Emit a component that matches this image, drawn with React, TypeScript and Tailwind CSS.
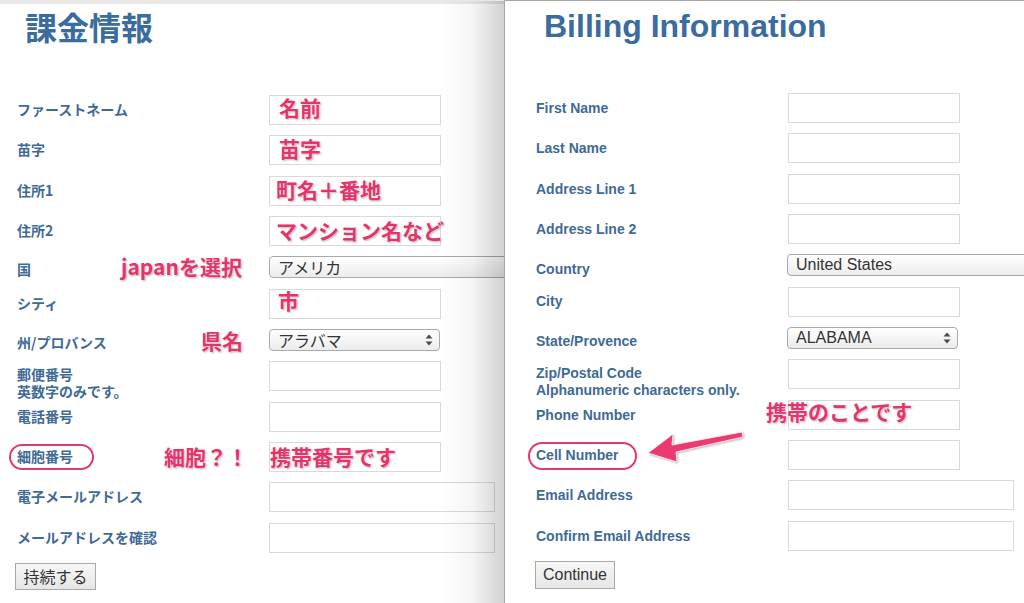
import type { ReactNode } from 'react'

const jp = "font-['Noto_Sans_CJK_JP',sans-serif]"
const en = "font-['Liberation_Sans',Arial,sans-serif]"

function Note({ className, children }: { className: string; children: ReactNode }) {
  return (
    <span
      className={`absolute whitespace-nowrap text-[21px] font-bold leading-none text-[#e5336b] [text-shadow:0_0_2px_#fff,1px_1px_2px_rgba(0,0,0,0.35)] ${jp} ${className}`}
    >
      {children}
    </span>
  )
}

function Ring({ className }: { className: string }) {
  return <span className={`absolute rounded-full border-[2.5px] border-[#e23a6c] ${className}`} />
}

function TextBox({ wide }: { wide?: boolean }) {
  return (
    <input
      readOnly
      className={`h-[30px] shrink-0 border border-[#d9d9d9] bg-white outline-none ${wide ? 'w-[226px]' : 'w-[172px]'}`}
    />
  )
}

function UpDown() {
  return (
    <svg width="8" height="12" viewBox="0 0 8 12" className="shrink-0">
      <path d="M4 0.5 L7.5 4.5 H0.5 Z" fill="#4a4a4a" />
      <path d="M4 11.5 L7.5 7.5 H0.5 Z" fill="#4a4a4a" />
    </svg>
  )
}

function Select({ value, full, font }: { value: string; full?: boolean; font: string }) {
  return (
    <div
      className={`flex h-[22px] shrink-0 items-center justify-between rounded-[4px] border border-[#a9a9a9] bg-gradient-to-b from-white to-[#ececec] pl-[8px] pr-[6px] text-[16px] leading-none text-[#333] ${font} ${full ? 'w-[260px]' : 'w-[171px]'}`}
    >
      <span className="whitespace-nowrap">{value}</span>
      {!full && <UpDown />}
    </div>
  )
}

function Row({
  label,
  children,
  tall = true,
  pt,
  extra,
}: {
  label: ReactNode
  children: ReactNode
  tall?: boolean
  pt: string
  extra?: ReactNode
}) {
  return (
    <div className={`relative flex items-start ${tall ? 'h-[30px]' : 'h-[22px]'}`}>
      <div className={`w-[252px] shrink-0 whitespace-nowrap text-[14px] font-bold leading-[16px] text-[#3f6a96] ${pt}`}>
        {label}
      </div>
      {children}
      {extra}
    </div>
  )
}

function Arrow() {
  return (
    <svg
      width="112"
      height="40"
      viewBox="0 0 112 40"
      className="absolute left-[100px] top-[-12px] drop-shadow-[1px_1px_1px_rgba(0,0,0,0.3)]"
    >
      <polygon
        points="12,25 37,6 36,17 106,4 107,9 40,24 41,34"
        fill="#ec3a70"
        stroke="#fff"
        strokeWidth="0.8"
        strokeLinejoin="round"
      />
    </svg>
  )
}

export default function App() {
  return (
    <div className="flex h-[603px] w-[1024px] overflow-hidden bg-white">
      {/* Japanese form */}
      <section className={`relative flex w-[504px] shrink-0 flex-col overflow-hidden border-t-[4px] border-[#e8e8e8] pl-[17px] pt-[6px] ${jp}`}>
        <h1 className="ml-[8px] h-[32px] text-[32px] font-bold leading-none text-[#3b6c9f]">課金情報</h1>

        <div className="mt-[53px] flex flex-col gap-[10.33px]">
          <Row label="ファーストネーム" pt="pt-[6px]" extra={<Note className="left-[262px] top-[2px]">名前</Note>}>
            <TextBox />
          </Row>
          <Row label="苗字" pt="pt-[6px]" extra={<Note className="left-[262px] top-[3px]">苗字</Note>}>
            <TextBox />
          </Row>
          <Row label="住所1" pt="pt-[6px]" extra={<Note className="left-[259px] top-[3px]">町名＋番地</Note>}>
            <TextBox />
          </Row>
          <Row label="住所2" pt="pt-[6px]" extra={<Note className="left-[259px] top-[4px]">マンション名など</Note>}>
            <TextBox />
          </Row>
          <Row label="国" tall={false} pt="pt-[5px]" extra={<Note className="left-[104px] top-[0px]">japanを選択</Note>}>
            <Select value="アメリカ" full font={jp} />
          </Row>
          <Row label="シティ" pt="pt-[6px]" extra={<Note className="left-[261px] top-[1px]">市</Note>}>
            <TextBox />
          </Row>
          <Row label="州/プロバンス" tall={false} pt="pt-[5px]" extra={<Note className="left-[184px] top-[1px]">県名</Note>}>
            <Select value="アラバマ" font={jp} />
          </Row>
          <Row
            label={
              <div className="leading-[17px]">
                郵便番号
                <br />
                英数字のみです。
              </div>
            }
            pt="pt-[5px]"
          >
            <TextBox />
          </Row>
          <Row label="電話番号" pt="pt-[6px]">
            <TextBox />
          </Row>
          <Row
            label="細胞番号"
            pt="pt-[6px]"
            extra={
              <>
                <Ring className="left-[-8px] top-[2px] h-[26px] w-[85px]" />
                <Note className="left-[147px] top-[4px]">細胞？！</Note>
                <Note className="left-[253px] top-[4px]">携帯番号です</Note>
              </>
            }
          >
            <TextBox />
          </Row>
          <Row label="電子メールアドレス" pt="pt-[6px]">
            <TextBox wide />
          </Row>
          <Row label="メールアドレスを確認" pt="pt-[6px]">
            <TextBox wide />
          </Row>
          <div>
            <button className="ml-[-2px] h-[27px] w-[81px] border border-[#a9a9a9] bg-gradient-to-b from-[#f7f7f7] to-[#e6e6e6] text-[16px] leading-none text-[#333]">
              持続する
            </button>
          </div>
        </div>
      </section>

      {/* English form */}
      <section className={`relative z-10 flex flex-1 flex-col border-l border-t border-[#a6a6a6] pl-[31px] pt-[9px] ${en}`}>
        <div className="pointer-events-none absolute left-[-65px] top-0 h-full w-[64px] bg-gradient-to-r from-transparent via-black/[0.04] to-black/[0.18]" />
        <h1 className="ml-[8px] h-[32px] text-[32px] font-bold leading-none text-[#3b6c9f]">Billing Information</h1>

        <div className="mt-[51px] flex flex-col gap-[10.33px]">
          <Row label="First Name" pt="pt-[7px]">
            <TextBox />
          </Row>
          <Row label="Last Name" pt="pt-[7px]">
            <TextBox />
          </Row>
          <Row label="Address Line 1" pt="pt-[7px]">
            <TextBox />
          </Row>
          <Row label="Address Line 2" pt="pt-[7px]">
            <TextBox />
          </Row>
          <Row label="Country" tall={false} pt="pt-[7px]">
            <div className="ml-[-1px]">
              <Select value="United States" full font={en} />
            </div>
          </Row>
          <Row label="City" pt="pt-[6px]">
            <TextBox />
          </Row>
          <Row label="State/Provence" tall={false} pt="pt-[6px]">
            <div className="ml-[-1px]">
              <Select value="ALABAMA" font={en} />
            </div>
          </Row>
          <Row
            label={
              <div className="leading-[17px]">
                Zip/Postal Code
                <br />
                Alphanumeric characters only.
              </div>
            }
            pt="pt-[6px]"
          >
            <TextBox />
          </Row>
          <Row label="Phone Number" pt="pt-[7px]" extra={<Note className="left-[230px] top-[1px]">携帯のことです</Note>}>
            <TextBox />
          </Row>
          <Row
            label="Cell Number"
            pt="pt-[7px]"
            extra={
              <>
                <Ring className="left-[-8px] top-[2px] h-[28px] w-[109px]" />
                <Arrow />
              </>
            }
          >
            <TextBox />
          </Row>
          <Row label="Email Address" pt="pt-[7px]">
            <TextBox wide />
          </Row>
          <Row label="Confirm Email Address" pt="pt-[7px]">
            <TextBox wide />
          </Row>
          <div>
            <button className="ml-[-1px] h-[28px] w-[80px] border border-[#a9a9a9] bg-gradient-to-b from-[#f7f7f7] to-[#e6e6e6] text-[16px] leading-none text-[#333]">
              Continue
            </button>
          </div>
        </div>
      </section>
    </div>
  )
}
